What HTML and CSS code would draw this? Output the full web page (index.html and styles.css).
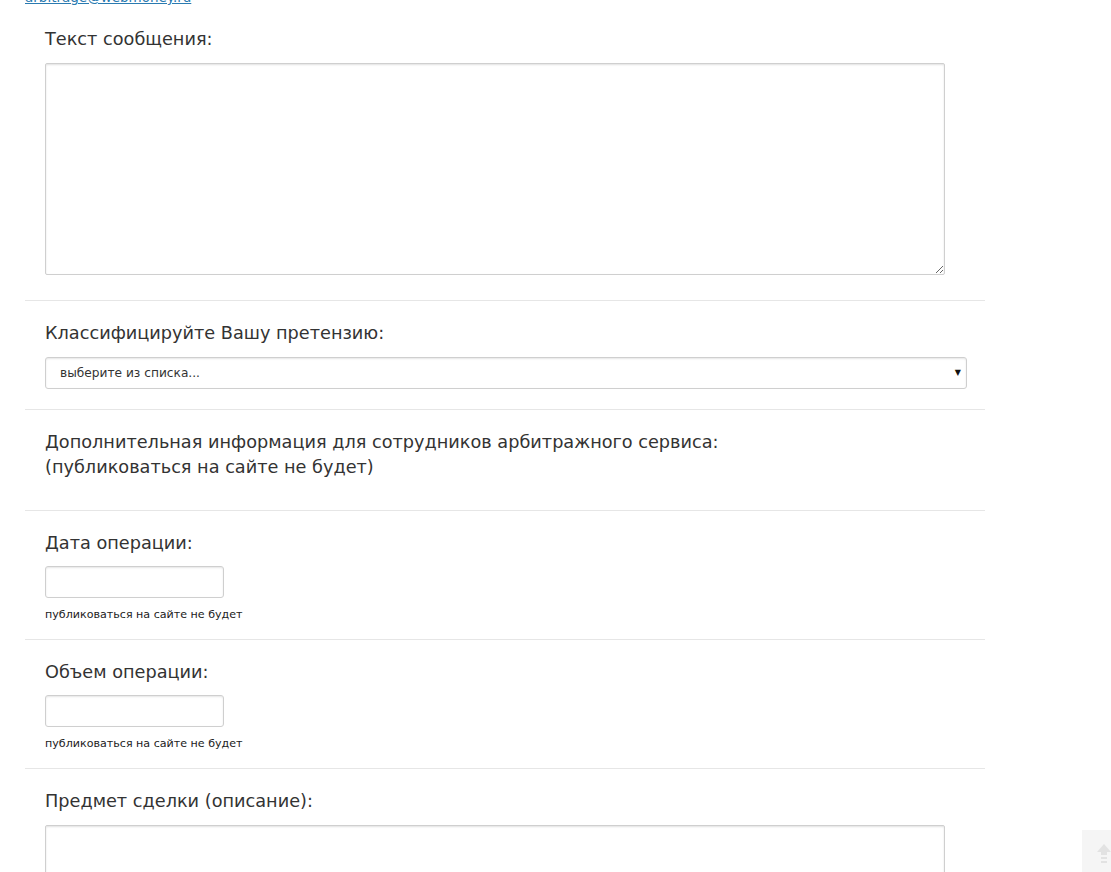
FILE: index.html
```html
<!DOCTYPE html>
<html lang="ru">
<head>
  <meta charset="UTF-8">
  <title>Претензия</title>
  <link rel="stylesheet" href="styles.css">
</head>
<body>
  <div class="page">
    <a class="mail-link" href="#">arbitrage@webmoney.ru</a>

    <div class="form-row first">
      <label class="form-label" for="msg">Текст сообщения:</label>
      <textarea id="msg" class="text-area"></textarea>
    </div>

    <div class="form-row">
      <label class="form-label" for="kind">Классифицируйте Вашу претензию:</label>
      <div class="select-wrap">
        <select id="kind" class="select-box">
          <option>выберите из списка...</option>
        </select>
        <span class="select-arrow">&#9660;</span>
      </div>
    </div>

    <div class="form-row info">
      <div class="form-label">Дополнительная информация для сотрудников арбитражного сервиса:<br>(публиковаться на сайте не будет)</div>
    </div>

    <div class="form-row short">
      <label class="form-label" for="date">Дата операции:</label>
      <input id="date" class="text-input" type="text">
      <div class="hint">публиковаться на сайте не будет</div>
    </div>

    <div class="form-row short">
      <label class="form-label" for="amount">Объем операции:</label>
      <input id="amount" class="text-input" type="text">
      <div class="hint">публиковаться на сайте не будет</div>
    </div>

    <div class="form-row last">
      <label class="form-label" for="subject">Предмет сделки (описание):</label>
      <textarea id="subject" class="text-area"></textarea>
    </div>
  </div>

  <a class="to-top" href="#">
    <svg width="14" height="20" viewBox="0 0 14 20">
      <path d="M7 0 L14 8 L10 8 L10 11 L4 11 L4 8 L0 8 Z" fill="#e2e2e2"/>
      <rect x="4" y="13" width="6" height="2" fill="#e2e2e2"/>
      <rect x="4" y="17" width="6" height="2" fill="#e2e2e2"/>
    </svg>
  </a>
</body>
</html>
```

FILE: styles.css
```css
html, body {
  height: 100%;
  overflow: hidden;
}

body {
  margin: 0;
  font-family: Verdana, "DejaVu Sans", sans-serif;
  color: #333;
  background: #fff;
}

.page {
  width: 960px;
  margin-left: 25px;
}

.mail-link {
  display: block;
  margin-top: -11px;
  height: 16px;
  font-size: 13.5px;
  line-height: 16px;
  color: #2a7ab0;
}

.form-row {
  padding: 20px 20px 20px;
  border-bottom: 1px solid #e6e6e6;
}

.form-row.first {
  padding-top: 22px;
}

.form-row.info {
  padding-bottom: 19px;
}

.form-row.short {
  padding-bottom: 18px;
}

.form-row.last {
  border-bottom: none;
}

.form-label {
  display: block;
  font-size: 17.7px;
  line-height: 25px;
  margin-bottom: 11px;
  color: #333;
}

.text-area {
  display: block;
  box-sizing: border-box;
  width: 900px;
  height: 212px;
  margin-bottom: 5px;
  border: 1px solid #cfcfcf;
  border-radius: 2px;
  box-shadow: inset 0 1px 2px rgba(0, 0, 0, 0.12);
  font-family: Verdana, "DejaVu Sans", sans-serif;
  resize: both;
}

.select-wrap {
  position: relative;
  width: 922px;
}

.select-box {
  display: block;
  box-sizing: border-box;
  width: 100%;
  height: 32px;
  padding: 0 30px 0 14px;
  border: 1px solid #cfcfcf;
  border-radius: 3px;
  background: #fff;
  box-shadow: inset 0 1px 2px rgba(0, 0, 0, 0.1);
  font-family: Verdana, "DejaVu Sans", sans-serif;
  font-size: 12.2px;
  color: #333;
  appearance: none;
  -webkit-appearance: none;
}

.select-arrow {
  position: absolute;
  right: 6px;
  top: 11px;
  font-size: 8px;
  line-height: 10px;
  color: #111;
  pointer-events: none;
}

.text-input {
  display: block;
  box-sizing: border-box;
  width: 179px;
  height: 32px;
  margin-top: -1px;
  border: 1px solid #cfcfcf;
  border-radius: 3px;
  box-shadow: inset 0 1px 2px rgba(0, 0, 0, 0.1);
}

.hint {
  margin-top: 11px;
  font-size: 11.1px;
  line-height: 12px;
  color: #222;
}

.to-top {
  position: fixed;
  right: 0;
  bottom: 0;
  width: 29px;
  height: 42px;
  background: #f5f5f5;
  display: flex;
  align-items: flex-end;
  justify-content: flex-end;
}

.to-top svg {
  margin: 0 0 8px 0;
}
```
